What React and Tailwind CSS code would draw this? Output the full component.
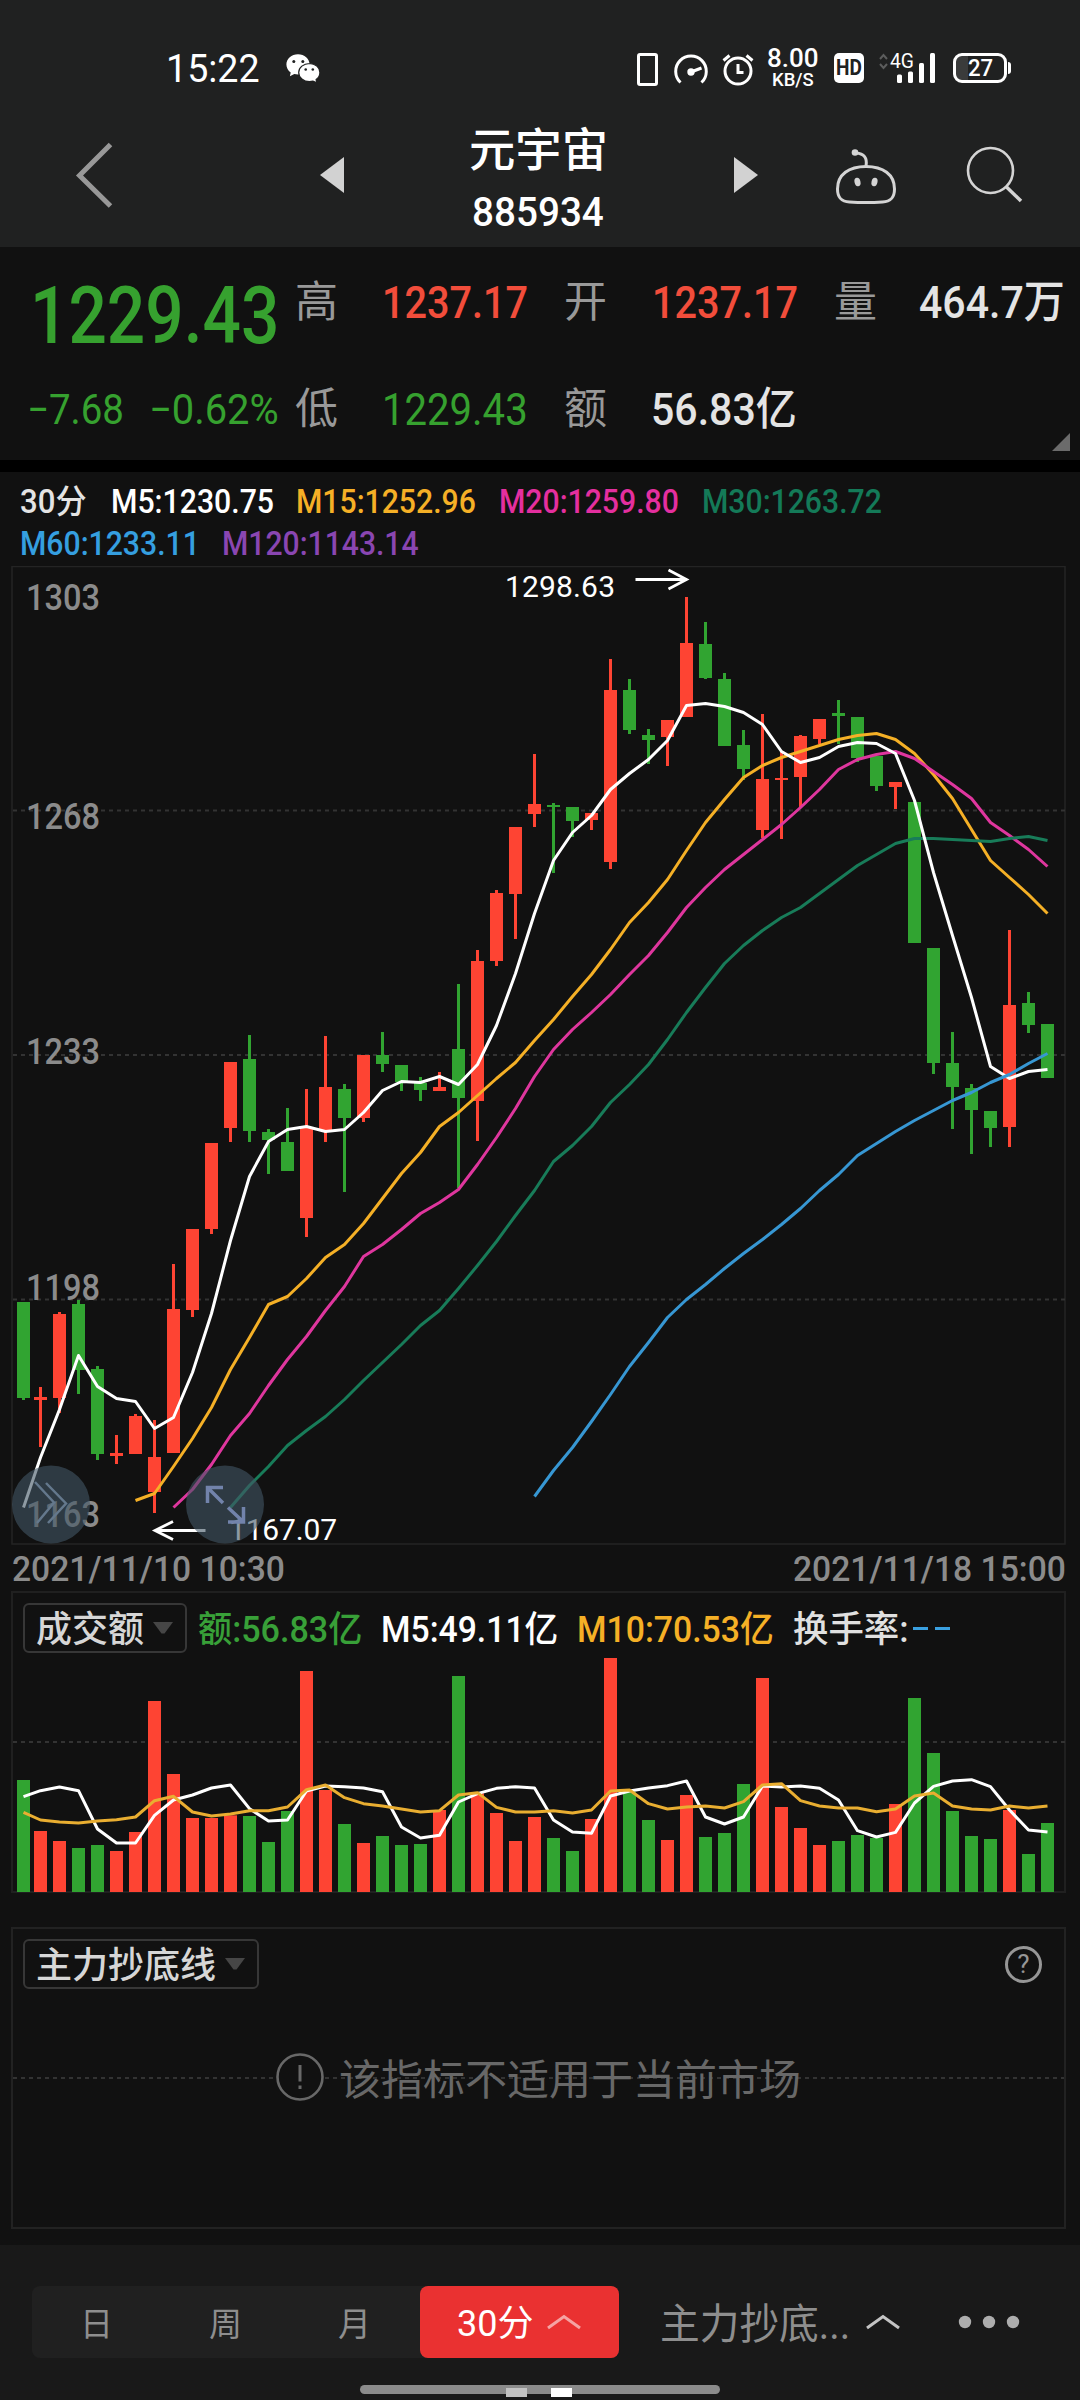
import React, { useLayoutEffect, useRef, useState } from 'react';

const RED = '#fe4433';
const GREEN = '#31a431';

// One row per 30-minute candle: [color, high, top, bottom, low]
const candles = [
  ['g', 1302, 1302, 1398, 1400],
  ['r', 1387, 1397, 1400, 1447],
  ['r', 1312, 1314, 1398, 1413],
  ['g', 1300, 1304, 1370, 1394],
  ['g', 1366, 1369, 1454, 1460],
  ['r', 1435, 1453, 1456, 1464],
  ['r', 1414, 1416, 1454, 1454],
  ['r', 1420, 1457, 1492, 1513],
  ['r', 1264, 1309, 1453, 1453],
  ['r', 1229, 1229, 1310, 1317],
  ['r', 1143, 1143, 1229, 1234],
  ['r', 1062, 1062, 1128, 1142],
  ['g', 1035, 1059, 1131, 1142],
  ['g', 1129, 1132, 1140, 1174],
  ['g', 1108, 1142, 1171, 1171],
  ['r', 1089, 1128, 1218, 1237],
  ['r', 1036, 1087, 1131, 1142],
  ['g', 1084, 1089, 1118, 1192],
  ['r', 1055, 1055, 1118, 1122],
  ['g', 1032, 1055, 1064, 1072],
  ['g', 1065, 1065, 1082, 1091],
  ['g', 1077, 1083, 1090, 1101],
  ['r', 1072, 1087, 1091, 1091],
  ['g', 984, 1049, 1098, 1188],
  ['r', 950, 961, 1101, 1141],
  ['r', 890, 893, 961, 966],
  ['r', 827, 827, 894, 939],
  ['r', 754, 804, 814, 827],
  ['g', 803, 805, 807, 873],
  ['g', 807, 807, 821, 837],
  ['r', 813, 813, 820, 830],
  ['r', 659, 690, 862, 869],
  ['g', 679, 690, 730, 734],
  ['g', 729, 735, 740, 764],
  ['r', 720, 720, 737, 766],
  ['r', 597, 643, 717, 717],
  ['g', 622, 644, 678, 679],
  ['g', 673, 679, 746, 746],
  ['g', 730, 745, 769, 780],
  ['r', 714, 779, 830, 838],
  ['r', 752, 778, 780, 839],
  ['r', 735, 736, 777, 807],
  ['r', 719, 719, 739, 744],
  ['g', 700, 713, 716, 744],
  ['g', 717, 717, 758, 762],
  ['g', 756, 756, 786, 791],
  ['r', 782, 782, 787, 809],
  ['g', 802, 802, 943, 943],
  ['g', 948, 948, 1063, 1074],
  ['g', 1032, 1063, 1087, 1129],
  ['g', 1084, 1088, 1110, 1154],
  ['g', 1111, 1111, 1128, 1147],
  ['r', 930, 1005, 1127, 1147],
  ['g', 992, 1003, 1025, 1033],
  ['g', 1024, 1024, 1078, 1078],
];

const volumes = [
  600, 753, 783, 804, 795, 813, 756, 363, 582, 714, 714, 706, 708, 786, 693, 273, 630, 732, 789,
  768, 795, 792, 690, 288, 640, 699, 783, 711, 774, 813, 717, 231, 636, 720, 780, 645, 771, 759,
  612, 294, 681, 744, 795, 783, 765, 774, 672, 354, 519, 693, 768, 777, 690, 822, 729,
];

const volM5 = [
  650, 632, 621, 632, 747, 789, 789, 706, 660, 645, 624, 615, 686, 723, 720, 633, 618, 620, 624,
  635, 741, 774, 766, 666, 641, 625, 620, 624, 720, 756, 760, 648, 633, 624, 617, 603, 711, 732,
  711, 618, 621, 618, 625, 660, 752, 771, 757, 669, 619, 603, 599, 620, 690, 750, 756,
];

const volM10 = [
  697, 720, 726, 729, 723, 719, 711, 662, 649, 696, 708, 702, 692, 692, 681, 629, 615, 653, 671,
  678, 687, 696, 692, 645, 638, 682, 696, 696, 692, 699, 690, 633, 630, 671, 687, 681, 678, 684,
  665, 615, 611, 662, 678, 684, 684, 695, 687, 648, 639, 678, 687, 690, 678, 684, 678,
];

// Moving averages, each starting at candle index `from`
const averages = [
  {
    color: '#f5b026', from: 6,
    values: [1500, 1493, 1466, 1438, 1407, 1369, 1337, 1304, 1296, 1278, 1257, 1244, 1223, 1198, 1173,
      1152, 1126, 1112, 1095, 1078, 1062, 1040, 1019, 996, 974, 949, 922, 902, 879, 850, 822, 799, 777,
      765, 757, 751, 745, 739, 735, 733, 739, 753, 774, 798, 829, 860, 877, 894, 913],
  },
  {
    color: '#df369e', from: 8,
    values: [1507, 1489, 1464, 1435, 1413, 1385, 1359, 1336, 1310, 1286, 1256, 1244, 1229, 1213, 1202,
      1189, 1164, 1137, 1108, 1076, 1049, 1029, 1012, 994, 974, 955, 932, 907, 887, 869, 854, 839, 824,
      807, 789, 769, 759, 754, 751, 758, 771, 784, 798, 822, 835, 849, 866],
  },
  {
    color: '#187c59', from: 11,
    values: [1507, 1485, 1466, 1445, 1430, 1416, 1399, 1380, 1362, 1344, 1325, 1310, 1288, 1265, 1241,
      1215, 1190, 1161, 1145, 1126, 1102, 1084, 1064, 1039, 1012, 987, 963, 945, 930, 917, 907, 893, 879,
      865, 854, 843, 838, 838, 839, 840, 841, 838, 836, 840],
  },
  {
    color: '#ffffff', from: 0,
    values: [1507, 1457, 1409, 1355, 1386, 1398, 1401, 1428, 1417, 1372, 1313, 1240, 1176, 1141, 1129,
      1126, 1131, 1129, 1112, 1090, 1081, 1082, 1076, 1084, 1064, 1025, 973, 913, 860, 832, 815, 789, 773,
      759, 740, 705, 703, 706, 712, 724, 751, 762, 757, 746, 742, 743, 753, 800, 872, 935, 997, 1066,
      1078, 1071, 1069],
  },
  {
    color: '#3797d3', from: 27,
    values: [1496, 1470, 1447, 1421, 1394, 1366, 1342, 1317, 1299, 1284, 1268, 1253, 1239, 1224, 1208,
      1190, 1174, 1155, 1143, 1131, 1120, 1110, 1100, 1092, 1082, 1074, 1063, 1053],
  },
];

const candleX = (i) => (i === 0 ? 23.5 : 40.5 + (i - 1) * 19);
const toPoints = (values, from, mapY) =>
  values.map((v, i) => `${candleX(i + from)},${mapY(v)}`).join(' ');
const volY = (v) => v / 3 - 12;

// Squeezes or stretches a single line of text to an exact width
const Fit = ({ w, className = '', children }) => {
  const ref = useRef(null);
  const [scale, setScale] = useState(1);
  useLayoutEffect(() => {
    setScale(w / ref.current.offsetWidth);
  }, [w]);
  return (
    <span className={`block shrink-0 whitespace-nowrap leading-none ${className}`} style={{ width: w }}>
      <span ref={ref} className="inline-block origin-left" style={{ transform: `scaleX(${scale})` }}>
        {children}
      </span>
    </span>
  );
};

const StatusBar = () => (
  <div className="flex h-[107px] items-start text-white">
    <Fit w={94} className="ml-[166px] mt-[50px] text-[38px]">15:22</Fit>
    <svg className="ml-[26px] mt-[53px]" width="34" height="31" viewBox="286 53 34 31">
      <path d="M298 54.2c-6.500 0-11.600 4.500-11.600 10.300 0 3.300 1.700 6.100 4.300 8l-.8 3.800 4.400-2.200c1.200.3 2.400.5 3.700.5 6.400 0 11.600-4.500 11.600-10.100 0-5.800-5.200-10.300-11.600-10.300z" fill="#fff" />
      <path d="M309.500 63.500c-6 0-10.800 4.100-10.800 9 0 5 4.800 9.100 10.800 9.100 1.200 0 2.400-.2 3.500-.5l3.800 1.800-.7-3.300c2.300-1.700 3.800-4.200 3.800-7.100 0-4.900-4.600-9-10.400-9z" fill="#fff" stroke="#202121" strokeWidth="1.200" />
      <g fill="#202121">
        <circle cx="293.800" cy="61.500" r="1.500" /><circle cx="302.800" cy="61.500" r="1.500" />
        <circle cx="305.700" cy="69.500" r="1.300" /><circle cx="312.800" cy="69.500" r="1.300" />
      </g>
    </svg>
    <svg className="ml-[316px] mt-[50px] shrink-0" width="120" height="40" viewBox="636 50 120 40" fill="none" stroke="#fff" strokeWidth="3">
      <rect x="638.500" y="54.500" width="18" height="30" rx="1.500" />
      <path d="M680.500 82.500A15.300 15.300 0 1 1 701.500 82.500" />
      <path d="M691 72l10.500-4" />
      <circle cx="691" cy="72" r="2.200" fill="#fff" />
      <circle cx="738" cy="71" r="13" />
      <path d="M723.500 60.500l6-5M752.500 60.500l-6-5M738 64v8.500h5.500" />
    </svg>
    <div className="ml-[11px] mt-[46px] flex w-[52px] flex-col items-center font-medium">
      <Fit w={52} className="text-[25px]">8.00</Fit>
      <Fit w={42} className="text-[18px]">KB/S</Fit>
    </div>
    <div className="ml-[15px] mt-[53px] flex h-[30px] w-[30px] items-center justify-center rounded-[5px] bg-white text-[#202121]">
      <Fit w={26} className="text-[22px] font-bold">HD</Fit>
    </div>
    <svg className="ml-[15px] mt-[50px] shrink-0" width="58" height="36" viewBox="879 50 58 36">
      <path d="M880 59l3.500-4 3.500 4M880 64l3.500 4 3.500-4" fill="none" stroke="#5c5d5d" strokeWidth="2" />
      <text x="890" y="68" fontSize="21" fill="#fff" textLength="24" lengthAdjust="spacingAndGlyphs">4G</text>
      <g fill="#fff">
        <rect x="897" y="74.500" width="5" height="8.500" rx="1.500" /><rect x="908" y="71.500" width="5" height="11.500" rx="1.500" />
        <rect x="919" y="63" width="5" height="20" rx="1.500" /><rect x="930" y="53" width="5" height="30" rx="1.500" />
      </g>
    </svg>
    <div className="ml-[16px] mt-[53px] flex h-[30px] w-[54px] items-center justify-center rounded-[9px] border-3 border-white bg-linear-to-r from-[#3a3b3b] from-25% to-transparent to-25%">
      <Fit w={25} className="text-[23px] font-medium">27</Fit>
    </div>
    <div className="ml-px mt-[62px] h-[12px] w-[2.5px] rounded-r bg-white" />
  </div>
);

const TitleBar = () => (
  <div className="flex h-[140px] items-start">
    <svg className="ml-[75px] mt-[34px]" width="40" height="70" viewBox="75 141 40 70">
      <path d="M110.500 144.500L79.500 175.500L110.500 206" fill="none" stroke="#989898" strokeWidth="5" />
    </svg>
    <svg className="ml-[205px] mt-[50px]" width="24" height="36"><path d="M0 18L24 0V36z" fill="#d2d2d2" /></svg>
    <div className="ml-[125px] mt-[20px] flex w-[138px] flex-col items-center font-medium text-white">
      <Fit w={139} className="text-[46px]">元宇宙</Fit>
      <Fit w={132} className="mt-[19px] text-[41px]">885934</Fit>
    </div>
    <svg className="ml-[127px] mt-[50px]" width="24" height="36"><path d="M24 18L0 0V36z" fill="#d2d2d2" /></svg>
    <svg className="ml-[76px] mt-[40px]" width="64" height="60" viewBox="834 147 64 60" fill="none" stroke="#d4d4d4" strokeWidth="3">
      <path d="M866 166.500c-17 0-28.500 8-28.500 22.500 0 9 4 12.500 12 13 10 .7 23 .7 33 0 8-.500 12-4 12-13 0-14.500-11.500-22.500-28.500-22.500z" />
      <path d="M866 166c1.500-8-2-12.500-10-13" />
      <circle cx="855" cy="152.500" r="3.300" fill="#d4d4d4" stroke="none" />
      <g fill="#d4d4d4" stroke="none"><ellipse cx="857.500" cy="182" rx="3" ry="4.300" transform="rotate(-12 857.500 182)" /><ellipse cx="874.500" cy="182" rx="3" ry="4.300" transform="rotate(12 874.500 182)" /></g>
    </svg>
    <svg className="ml-[67px] mt-[38px]" width="60" height="60" viewBox="965 145 60 60" fill="none" stroke="#d4d4d4" strokeWidth="2.600">
      <circle cx="990.500" cy="170.500" r="22.500" />
      <path d="M1006 186.500L1021 201" strokeWidth="3.500" />
    </svg>
  </div>
);

const QuoteHeader = () => (
  <div className="flex h-[213px] text-[45px] leading-none">
    <div className="w-[295px] shrink-0 text-[#36a12f]">
      <Fit w={249} className="ml-[30px] mt-[30px] text-[79px] font-medium">1229.43</Fit>
      <div className="mt-[33px] flex text-[42px]">
        <Fit w={97} className="ml-[27px]">−7.68</Fit>
        <Fit w={130} className="ml-[25px]">−0.62%</Fit>
      </div>
    </div>
    <div className="mt-[33px] grid h-[150px] grid-cols-[90px_179px_90px_180px_86px_1fr] grid-rows-[107px_45px] font-medium text-[#e4e4e4]">
      <span className="pt-px text-[43px] font-normal text-[#999]">高</span>
      <Fit w={146} className="ml-[-3px] text-[#f24d3b]">1237.17</Fit>
      <span className="pt-px text-[43px] font-normal text-[#999]">开</span>
      <Fit w={146} className="ml-[-2px] text-[#f24d3b]">1237.17</Fit>
      <span className="pt-px text-[43px] font-normal text-[#999]">量</span>
      <Fit w={146} className="ml-[-1px]">464.7万</Fit>
      <span className="pt-px text-[43px] font-normal text-[#999]">低</span>
      <Fit w={146} className="ml-[-3px] font-normal text-[#36a12f]">1229.43</Fit>
      <span className="pt-px text-[43px] font-normal text-[#999]">额</span>
      <Fit w={146} className="ml-[-3px]">56.83亿</Fit>
      <span />
      <svg className="ml-[132px] mt-[46px]" width="18" height="19"><path d="M18 0V18H0z" fill="#6b6b6b" /></svg>
    </div>
  </div>
);

const AverageLegend = () => (
  <div className="h-[94px] pt-[13px] text-[33px] font-medium">
    <div className="flex">
      <Fit w={67} className="ml-[20px] text-[#e4e4e4]">30分</Fit>
      <Fit w={163} className="ml-[24px] text-white">M5:1230.75</Fit>
      <Fit w={180} className="ml-[22px] text-[#f5b026]">M15:1252.96</Fit>
      <Fit w={180} className="ml-[23px] text-[#e42f9f]">M20:1259.80</Fit>
      <Fit w={180} className="ml-[23px] text-[#147a58]">M30:1263.72</Fit>
    </div>
    <div className="mt-[9px] flex">
      <Fit w={180} className="ml-[20px] text-[#359fe0]">M60:1233.11</Fit>
      <Fit w={197} className="ml-[22px] text-[#8a46b2]">M120:1143.14</Fit>
    </div>
  </div>
);

const Bar = ({ x, y, bottom, color }) => (
  <rect x={x - 6.5} y={y} width="13" height={bottom - y} fill={color} />
);

const PriceChart = () => (
  <svg className="block" width="1080" height="982" viewBox="0 566 1080 982">
    <rect x="12" y="566.500" width="1053" height="977.500" fill="none" stroke="#242424" strokeWidth="1.500" />
    {[810.5, 1055, 1299.5].map((y) => (
      <line key={y} x1="13" x2="1065" y1={y} y2={y} stroke="#333" strokeWidth="1.800" strokeDasharray="4 4" />
    ))}
    <g fill="#8b8b8b" fontSize="36.500" fontWeight="500">
      {[['1303', 609.5], ['1268', 828.5], ['1233', 1063.5], ['1198', 1299.5], ['1163', 1526.5]].map(([label, y]) => (
        <text key={label} x="26" y={y} textLength="74" lengthAdjust="spacingAndGlyphs">{label}</text>
      ))}
    </g>
    {candles.map(([c, high, top, bottom, low], i) => {
      const color = c === 'r' ? RED : GREEN;
      return (
        <g key={i}>
          <rect x={candleX(i) - 1.5} y={high} width="3" height={low - high} fill={color} />
          <Bar x={candleX(i)} y={top} bottom={bottom} color={color} />
        </g>
      );
    })}
    {averages.map(({ color, from, values }) => (
      <polyline key={color} points={toPoints(values, from, (v) => v + 0.5)} fill="none" stroke={color} strokeWidth="3" strokeLinejoin="round" />
    ))}
    <g fill="none" stroke="#fff" strokeWidth="2.800">
      <path d="M635.500 579.500H686M668.500 570L686.500 579.500L668.500 589" />
      <path d="M205.500 1530.500H155M173 1521.500L155 1530.500L173 1539.500" />
    </g>
    <g fill="#fff" fontSize="30">
      <text x="505" y="597" textLength="110">1298.63</text>
      <text x="229" y="1540" textLength="108">1167.07</text>
    </g>
    <g fill="#435766" fillOpacity="0.6">
      <circle cx="51" cy="1504.500" r="39" />
      <circle cx="225" cy="1504.500" r="39" />
    </g>
    <path d="M35 1482L54 1502.500L37 1523M46 1483L66 1503.500L48 1523" fill="none" stroke="#64788c" strokeWidth="2.500" />
    <path d="M223 1487.500H207.500V1503M207.500 1487.500L223 1503M228 1522H243.500V1507M243.500 1522L228 1507.500" fill="none" stroke="#7283ab" strokeWidth="3.500" />
  </svg>
);

const IndicatorButton = ({ w, children }) => (
  <button className="flex h-[50px] shrink-0 items-center gap-[9px] rounded-md border-2 border-[#373737] pl-[11px] pr-[12px] text-[36px] text-[#d6d6d6]">
    <Fit w={w} className="mt-[3px] font-medium">{children}</Fit>
    <svg width="20" height="12"><path d="M0 0H20L11.500 11.500H8.500z" fill="#464646" /></svg>
  </button>
);

const VolumePanel = () => (
  <div className="mx-[11px] h-[302px] w-[1055px] border-2 border-[#202020]">
    <div className="flex h-[70px] items-center pl-[10px] text-[36px] font-medium">
      <IndicatorButton w={108}>成交额</IndicatorButton>
      <Fit w={164} className="ml-[11px] mt-[3px] text-[#38a038]">额:56.83亿</Fit>
      <Fit w={177} className="ml-[19px] mt-[3px] text-white">M5:49.11亿</Fit>
      <Fit w={197} className="ml-[19px] mt-[3px] text-[#f5b026]">M10:70.53亿</Fit>
      <Fit w={116} className="ml-[19px] mt-[3px] text-[#e0e0e0]">换手率:</Fit>
      <span className="ml-[4px] flex gap-[7px]">
        <i className="h-[3px] w-[15px] bg-[#3aa0e0]" />
        <i className="h-[3px] w-[15px] bg-[#3aa0e0]" />
      </span>
    </div>
    <svg className="ml-[-13px] mt-[-5px] block" width="1080" height="234" viewBox="0 66 1080 234">
      <line x1="13" x2="1065" y1="150" y2="150" stroke="#333" strokeWidth="1.800" strokeDasharray="4 4" />
      {volumes.map((v, i) => (
        <Bar key={i} x={candleX(i)} y={volY(v)} bottom={300} color={candles[i][0] === 'r' ? RED : GREEN} />
      ))}
      <polyline points={toPoints(volM5, 0, volY)} fill="none" stroke="#fff" strokeWidth="3" strokeLinejoin="round" />
      <polyline points={toPoints(volM10, 0, volY)} fill="none" stroke="#e9ae31" strokeWidth="3" strokeLinejoin="round" />
    </svg>
  </div>
);

const EmptyPanel = () => (
  <div className="mx-[11px] mt-[34px] h-[302px] w-[1055px] border-2 border-[#222]">
    <div className="flex h-[70px] items-center justify-between pl-[10px] pr-[22px]">
      <IndicatorButton w={180}>主力抄底线</IndicatorButton>
      <div className="flex h-[37px] w-[37px] items-center justify-center rounded-full border-3 border-[#969696] text-[26px] leading-none text-[#969696]">?</div>
    </div>
    <div className="flex h-[156px] items-center bg-[repeating-linear-gradient(90deg,#333_0_4px,transparent_4px_8px)] bg-[length:100%_2px] bg-[position:0_78px] bg-no-repeat pl-[262px] text-[42px] text-[#686868]">
      <svg className="shrink-0" width="50" height="50" fill="#111" stroke="#686868" strokeWidth="2.600">
        <circle cx="25" cy="25" r="22.500" />
        <path d="M25 13V29.500M25 33.500V37" strokeWidth="3" />
      </svg>
      <Fit w={462} className="ml-[14px] mt-[8px]">该指标不适用于当前市场</Fit>
    </div>
  </div>
);

const Chevron = ({ color }) => (
  <svg width="36" height="16" fill="none" stroke={color} strokeWidth="3">
    <path d="M2 14L18 2.500L34 14" />
  </svg>
);

const BottomBar = () => (
  <div className="mt-[16px] h-[155px] bg-[#191919] pt-[41px] text-[#8e8e8e]">
    <div className="flex h-[72px] items-center">
      <div className="ml-[32px] flex h-[72px] w-[587px] items-center rounded-lg bg-[#202020] text-[33px] leading-none">
        {['日', '周', '月'].map((tab) => (
          <button key={tab} className="w-[129px] pt-[4px]">{tab}</button>
        ))}
        <button className="ml-auto flex h-[72px] w-[199px] items-center rounded-lg bg-[#ea3131] pl-[37px] text-[36px] text-white">
          <Fit w={76} className="mt-[4px]">30分</Fit>
          <span className="ml-[13px] flex"><Chevron color="#f5a3a3" /></span>
        </button>
      </div>
      <Fit w={190} className="ml-[41px] mt-[6px] text-[42px]">主力抄底...</Fit>
      <span className="ml-[15px] flex"><Chevron color="#c4c4c4" /></span>
      <svg className="ml-[56px]" width="64" height="14" fill="#adadad">
        <circle cx="8" cy="7" r="6.200" /><circle cx="32" cy="7" r="6.200" /><circle cx="56" cy="7" r="6.200" />
      </svg>
    </div>
    <div className="mx-auto mt-[27px] flex h-[9px] w-[360px] rounded-full bg-[#8b8b8b]">
      <i className="ml-[146px] mt-[3px] h-[9px] w-[21px] bg-[#c2c2c2]" />
      <i className="ml-[24px] mt-[3px] h-[9px] w-[21px] bg-white" />
    </div>
  </div>
);

export default function App() {
  return (
    <div className="h-[2400px] w-[1080px] overflow-hidden bg-[#111] font-['Roboto','Noto_Sans_CJK_SC',sans-serif]">
      <div className="bg-[#202121]">
        <StatusBar />
        <TitleBar />
      </div>
      <QuoteHeader />
      <div className="h-[12px] bg-black" />
      <AverageLegend />
      <PriceChart />
      <div className="flex h-[43px] justify-between pl-[12px] pr-[14px] pt-[4px] text-[35px] font-medium text-[#8b8b8b]">
        <Fit w={273}>2021/11/10 10:30</Fit>
        <Fit w={273}>2021/11/18 15:00</Fit>
      </div>
      <VolumePanel />
      <EmptyPanel />
      <BottomBar />
    </div>
  );
}
